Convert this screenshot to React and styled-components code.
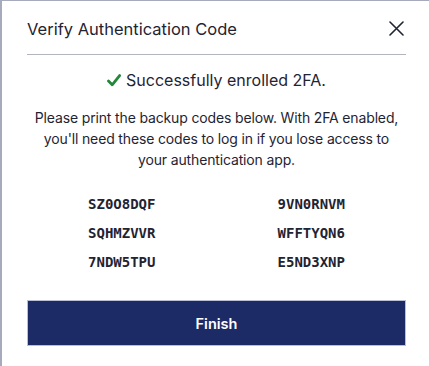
import React from "react";
import styled, { createGlobalStyle } from "styled-components";

const Global = createGlobalStyle`
  html, body { margin: 0; padding: 0; }
  body {
    background: #a7a9bd;
    width: 429px;
    height: 366px;
    overflow: hidden;
    font-family: Inter, "Noto Sans", sans-serif;
  }
`;

const Modal = styled.div`
  margin: 1px 0 0 2px;
  height: 365px;
  background: #ffffff;
  box-sizing: border-box;
  padding: 0 23px 0 25px;
  color: #1f2433;
`;

const Header = styled.div`
  display: flex;
  align-items: center;
  justify-content: space-between;
  height: 54px;
  padding-top: 2px;
  box-sizing: border-box;
  border-bottom: 1px solid #b3b5bd;
`;

const Title = styled.h2`
  margin: 0;
  font-size: 16.5px;
  font-weight: 400;
  color: #1f2433;
`;

const Close = styled.button`
  border: 0;
  background: transparent;
  padding: 0;
  width: 16px;
  height: 16px;
  display: flex;
  align-items: center;
  justify-content: center;
  margin-right: 2px;
  cursor: pointer;
`;

const Body = styled.div`
  display: flex;
  flex-direction: column;
  align-items: center;
  padding-top: 14px;
`;

const Success = styled.div`
  display: flex;
  align-items: center;
  gap: 5px;
  font-size: 16px;
  line-height: 22px;
  color: #1f2433;
`;

const Info = styled.p`
  margin: 16px 0 0;
  text-align: center;
  font-size: 14px;
  letter-spacing: -0.15px;
  line-height: 21px;
  white-space: nowrap;
  color: #1f2433;
`;

const Codes = styled.div`
  display: grid;
  grid-template-columns: 1fr 1fr;
  row-gap: 9px;
  width: 100%;
  margin-top: 24px;
`;

const Code = styled.span`
  text-align: center;
  font-family: "DejaVu Sans Mono", monospace;
  font-weight: 700;
  font-size: 14px;
  line-height: 20px;
  color: #1f2433;
`;

const FinishButton = styled.button`
  margin-top: 28px;
  width: 100%;
  height: 46px;
  background: #1c2b65;
  border: 1px solid #b8bfd6;
  color: #ffffff;
  font-family: Inter, "Noto Sans", sans-serif;
  font-weight: 600;
  font-size: 14.5px;
  cursor: pointer;
`;

const codes = [
  "SZ0O8DQF", "9VN0RNVM",
  "SQHMZVVR", "WFFTYQN6",
  "7NDW5TPU", "E5ND3XNP",
];

export default function App() {
  return (
    <>
      <Global />
      <Modal>
        <Header>
          <Title>Verify Authentication Code</Title>
          <Close aria-label="Close">
            <svg width="15" height="15" viewBox="0 0 15 15">
              <path d="M1 1 L14 14 M14 1 L1 14" stroke="#1f2433" strokeWidth="1.6" strokeLinecap="round" />
            </svg>
          </Close>
        </Header>
        <Body>
          <Success>
            <svg width="14" height="13" viewBox="0 0 14 13">
              <path d="M1.5 7 L5.2 10.8 L12.6 1.6" fill="none" stroke="#23883a" strokeWidth="2.8" strokeLinecap="round" strokeLinejoin="round" />
            </svg>
            Successfully enrolled 2FA.
          </Success>
          <Info>
            Please print the backup codes below. With 2FA enabled,<br />
            you'll need these codes to log in if you lose access to<br />
            your authentication app.
          </Info>
          <Codes>
            {codes.map((c) => (
              <Code key={c}>{c}</Code>
            ))}
          </Codes>
          <FinishButton>Finish</FinishButton>
        </Body>
      </Modal>
    </>
  );
}
